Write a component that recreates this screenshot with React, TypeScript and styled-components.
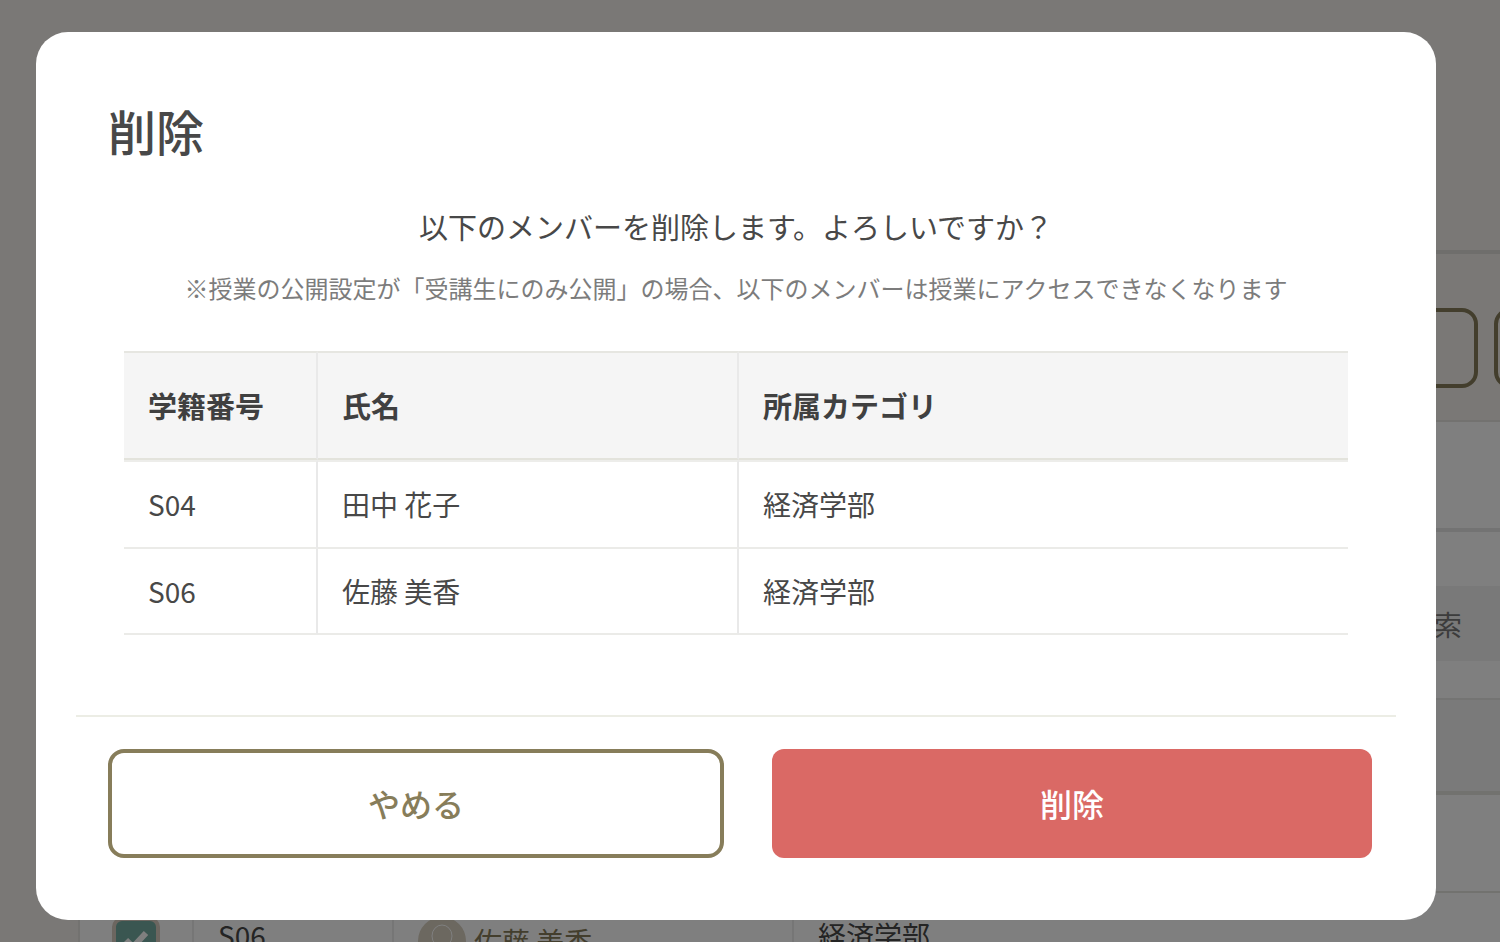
import React from "react";
import styled, { createGlobalStyle } from "styled-components";

const GlobalStyle = createGlobalStyle`
  *, *::before, *::after { box-sizing: border-box; }
  body {
    margin: 0;
    color: #484848;
    font-family: "Noto Sans CJK JP", "Noto Sans", sans-serif;
    font-size: 28px;
    line-height: 40px;
  }
  button, input { font: inherit; color: inherit; }
`;

const Page = styled.div`
  height: 100vh;
  overflow: hidden;
  background: #f5f1ed;
`;

const TopBar = styled.header`
  height: 254px;
  margin-left: 78px;
  border-bottom: 4px solid #dedcd8;
`;

const Actions = styled.div`
  display: flex;
  justify-content: flex-end;
  gap: 16px;
  height: 166px;
  padding: 54px 0 32px;
  margin-right: -216px;
`;

const PageButton = styled.button`
  width: 222px;
  height: 80px;
  border: 4px solid #877d5a;
  border-radius: 16px;
  background: transparent;
`;

const Panel = styled.main`
  margin-left: 78px;
  border-top: 2px solid #e6e4e0;
  border-left: 2px solid #e6e4e0;
  background: #fff;
`;

const PanelHead = styled.div`
  height: 110px;
  border-bottom: 4px solid #e6e6e6;
`;

const SearchRow = styled.div`
  display: flex;
  justify-content: flex-end;
  padding: 54px 0 37px;
`;

const SearchButton = styled.button`
  width: 160px;
  height: 75px;
  padding: 0 38px;
  border: 0;
  background: #f2f2f2;
  color: #787878;
  text-align: right;
`;

const MemberTable = styled.table`
  width: 100%;
  border-collapse: separate;
  border-spacing: 0;
  table-layout: fixed;
`;

const MemberHead = styled.th<{ $width?: number }>`
  width: ${(p) => (p.$width ? `${p.$width}px` : "auto")};
  height: 97px;
  border-top: 2px solid #e8e8e6;
  border-bottom: 4px solid #e4e4de;
  background: #f4f4f4;
`;

const MemberCell = styled.td<{ $text?: boolean }>`
  height: 98px;
  padding: 0 24px ${(p) => (p.$text ? "12px" : "0")};
  border-right: 2px solid #ececec;
  border-bottom: 2px solid #e4e4de;
  &:last-child { border-right: 0; }
`;

const Check = styled.input`
  appearance: none;
  display: block;
  width: 48px;
  height: 48px;
  margin: 0 8px;
  border: 4px solid #d8ccc0;
  border-radius: 10px;
  background: #74aca2;
`;

const CheckWrap = styled.label`
  display: grid;
  > * { grid-area: 1 / 1; }
`;

const CheckMark = styled.svg`
  width: 32px;
  height: 32px;
  margin: 8px 16px;
`;

const Member = styled.a`
  display: flex;
  align-items: center;
  gap: 8px;
  color: #877d5a;
  text-decoration: none;
`;

const Overlay = styled.div`
  position: fixed;
  inset: 0;
  padding: 32px 64px 22px 36px;
  overflow: auto;
  background: rgba(0, 0, 0, 0.5);
`;

const Dialog = styled.section`
  padding: 68px 40px 62px;
  border-radius: 32px;
  background: #fff;
`;

const Title = styled.h1`
  margin: 0 32px;
  font-size: 48px;
  font-weight: 500;
  line-height: 60px;
`;

const Message = styled.p`
  margin: 46px 0 0;
  font-size: 29px;
  line-height: 40px;
  text-align: center;
`;

const Note = styled.p`
  margin: 26px 0 0;
  color: #7c7c7c;
  font-size: 24px;
  line-height: 32px;
  text-align: center;
`;

const TableArea = styled.div`
  padding: 47px 48px 80px;
`;

const Table = styled.table`
  width: 100%;
  border-collapse: separate;
  border-spacing: 0;
  table-layout: fixed;
  text-align: left;
`;

const Th = styled.th<{ $width?: number }>`
  width: ${(p) => (p.$width ? `${p.$width}px` : "auto")};
  height: 109px;
  padding: 0 24px 2px;
  border-top: 2px solid #e6e6e1;
  border-right: 2px solid #e9e9e9;
  border-bottom: 2px solid #e3e3dc;
  background: #f5f5f5;
  color: #404040;
  font-size: 29px;
  font-weight: 700;
  &:last-child { border-right: 0; }
`;

const Td = styled.td`
  height: 86px;
  padding: 0 24px;
  border-right: 2px solid #e9e9e9;
  border-bottom: 2px solid #ebebe8;
  &:last-child { border-right: 0; }
  tr:first-child > & {
    height: 89px;
    padding-bottom: 2px;
    border-top: 2px solid #ededea;
  }
`;

const Footer = styled.footer`
  display: grid;
  grid-template-columns: 77fr 75fr;
  gap: 48px;
  padding: 32px 24px 0 32px;
  border-top: 2px solid #ecede5;
`;

const Button = styled.button<{ $danger?: boolean }>`
  height: 109px;
  padding: 0 24px 2px;
  border: ${(p) => (p.$danger ? "0" : "4px solid #877d5a")};
  border-radius: ${(p) => (p.$danger ? "12px" : "16px")};
  background: ${(p) => (p.$danger ? "#da6965" : "#fff")};
  color: ${(p) => (p.$danger ? "#fff" : "#877d5a")};
  font-size: 32px;
  font-weight: 500;
  cursor: pointer;
`;

const members = [
  { id: "S04", name: "田中 花子", category: "経済学部" },
  { id: "S06", name: "佐藤 美香", category: "経済学部" },
];

export default function App() {
  return (
    <>
      <GlobalStyle />
      <Page>
        <TopBar />
        <Actions>
          <PageButton />
          <PageButton />
        </Actions>
        <Panel>
          <PanelHead />
          <SearchRow>
            <SearchButton>検索</SearchButton>
          </SearchRow>
          <MemberTable>
            <thead>
              <tr>
                <MemberHead $width={114} />
                <MemberHead $width={200} />
                <MemberHead $width={400} />
                <MemberHead />
              </tr>
            </thead>
            <tbody>
              <tr>
                <MemberCell />
                <MemberCell />
                <MemberCell />
                <MemberCell />
              </tr>
              <tr>
                <MemberCell>
                  <CheckWrap>
                    <Check type="checkbox" defaultChecked aria-label="S06" />
                    <CheckMark viewBox="0 0 32 32" fill="none" stroke="#fff" strokeWidth="6">
                      <path d="M6 15l7 7L26 8" />
                    </CheckMark>
                  </CheckWrap>
                </MemberCell>
                <MemberCell $text>S06</MemberCell>
                <MemberCell>
                  <Member href="#">
                    <svg width="48" height="48" viewBox="0 0 48 48" fill="none">
                      <circle cx="24" cy="24" r="24" fill="#d8d0c0" />
                      <ellipse cx="24" cy="19" rx="10" ry="11" stroke="#fff" strokeWidth="1" />
                    </svg>
                    佐藤 美香
                  </Member>
                </MemberCell>
                <MemberCell $text>経済学部</MemberCell>
              </tr>
            </tbody>
          </MemberTable>
        </Panel>
      </Page>
      <Overlay>
        <Dialog role="dialog" aria-modal="true" aria-labelledby="dialog-title">
          <Title id="dialog-title">削除</Title>
          <Message>以下のメンバーを削除します。よろしいですか？</Message>
          <Note>※授業の公開設定が「受講生にのみ公開」の場合、以下のメンバーは授業にアクセスできなくなります</Note>
          <TableArea>
            <Table>
              <thead>
                <tr>
                  <Th $width={194}>学籍番号</Th>
                  <Th $width={421}>氏名</Th>
                  <Th>所属カテゴリ</Th>
                </tr>
              </thead>
              <tbody>
                {members.map((m) => (
                  <tr key={m.id}>
                    <Td>{m.id}</Td>
                    <Td>{m.name}</Td>
                    <Td>{m.category}</Td>
                  </tr>
                ))}
              </tbody>
            </Table>
          </TableArea>
          <Footer>
            <Button>やめる</Button>
            <Button $danger>削除</Button>
          </Footer>
        </Dialog>
      </Overlay>
    </>
  );
}
